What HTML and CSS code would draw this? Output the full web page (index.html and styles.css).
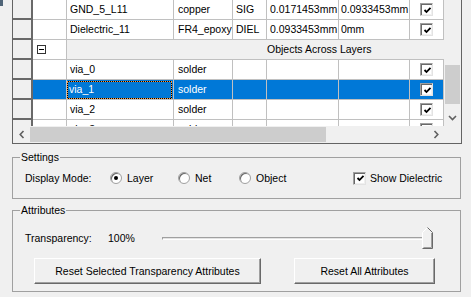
FILE: index.html
```html
<!DOCTYPE html>
<html>
<head>
<meta charset="utf-8">
<link rel="stylesheet" href="styles.css">
</head>
<body>
<div class="corner-mark"></div>
<div class="grid">
  <div class="grid-main">
    <div class="rows">
      <div class="row">
        <div class="c hdr"></div><div class="c c2"></div><div class="c name">GND_5_L11</div><div class="c mat">copper</div><div class="c typ">SIG</div><div class="c th">0.0171453mm</div><div class="c th2">0.0933453mm</div><div class="c chk"><span class="cb"><svg width="9" height="9" viewBox="0 0 9 9"><path d="M1.5 4 L3.5 6 L7.5 1.8" fill="none" stroke="#000" stroke-width="1.8"/></svg></span></div>
      </div>
      <div class="row">
        <div class="c hdr"></div><div class="c c2"></div><div class="c name">Dielectric_11</div><div class="c mat">FR4_epoxy</div><div class="c typ">DIEL</div><div class="c th">0.0933453mm</div><div class="c th2">0mm</div><div class="c chk"><span class="cb"><svg width="9" height="9" viewBox="0 0 9 9"><path d="M1.5 4 L3.5 6 L7.5 1.8" fill="none" stroke="#000" stroke-width="1.8"/></svg></span></div>
      </div>
      <div class="row group">
        <div class="c hdr"></div><div class="c c2"><span class="minus"></span></div><div class="c span">Objects Across Layers</div>
      </div>
      <div class="row">
        <div class="c hdr"></div><div class="c c2"></div><div class="c name">via_0</div><div class="c mat">solder</div><div class="c typ"></div><div class="c th"></div><div class="c th2"></div><div class="c chk"><span class="cb"><svg width="9" height="9" viewBox="0 0 9 9"><path d="M1.5 4 L3.5 6 L7.5 1.8" fill="none" stroke="#000" stroke-width="1.8"/></svg></span></div>
      </div>
      <div class="row sel">
        <div class="c hdr"></div><div class="c c2"></div><div class="c name"><span class="focus">via_1</span></div><div class="c mat">solder</div><div class="c typ"></div><div class="c th"></div><div class="c th2"></div><div class="c chk"><span class="cb"><svg width="9" height="9" viewBox="0 0 9 9"><path d="M1.5 4 L3.5 6 L7.5 1.8" fill="none" stroke="#000" stroke-width="1.8"/></svg></span></div>
      </div>
      <div class="row">
        <div class="c hdr"></div><div class="c c2"></div><div class="c name">via_2</div><div class="c mat">solder</div><div class="c typ"></div><div class="c th"></div><div class="c th2"></div><div class="c chk"><span class="cb"><svg width="9" height="9" viewBox="0 0 9 9"><path d="M1.5 4 L3.5 6 L7.5 1.8" fill="none" stroke="#000" stroke-width="1.8"/></svg></span></div>
      </div>
      <div class="row">
        <div class="c hdr"></div><div class="c c2"></div><div class="c name">via_3</div><div class="c mat">solder</div><div class="c typ"></div><div class="c th"></div><div class="c th2"></div><div class="c chk"><span class="cb"><svg width="9" height="9" viewBox="0 0 9 9"><path d="M1.5 4 L3.5 6 L7.5 1.8" fill="none" stroke="#000" stroke-width="1.8"/></svg></span></div>
      </div>
    </div>
    <div class="vscroll">
      <div class="vtrack"><div class="vthumb"></div></div>
      <div class="arrow"><svg width="9" height="6" viewBox="0 0 9 6"><path d="M1 1 L4.5 4.5 L8 1" fill="none" stroke="#606060" stroke-width="1.6"/></svg></div>
    </div>
  </div>
  <div class="hbar">
    <div class="hscroll">
      <div class="arrow"><svg width="6" height="9" viewBox="0 0 6 9"><path d="M4.5 1 L1.2 4.5 L4.5 8" fill="none" stroke="#606060" stroke-width="1.6"/></svg></div>
      <div class="htrack"><div class="hthumb"></div></div>
      <div class="arrow"><svg width="6" height="9" viewBox="0 0 6 9"><path d="M1.5 1 L4.8 4.5 L1.5 8" fill="none" stroke="#606060" stroke-width="1.6"/></svg></div>
    </div>
    <div class="corner"></div>
  </div>
</div>

<fieldset class="box settings">
  <legend>Settings</legend>
  <div class="settings-row">
    <span class="lbl">Display Mode:</span>
    <label class="radio r1"><span class="dot on"></span>Layer</label>
    <label class="radio r2"><span class="dot"></span>Net</label>
    <label class="radio r3"><span class="dot"></span>Object</label>
    <label class="check"><span class="cb"><svg width="9" height="9" viewBox="0 0 9 9"><path d="M1.5 4 L3.5 6 L7.5 1.8" fill="none" stroke="#000" stroke-width="1.8"/></svg></span>Show Dielectric</label>
  </div>
</fieldset>

<fieldset class="box attrs">
  <legend>Attributes</legend>
  <div class="trans-row">
    <span class="tlbl">Transparency:</span>
    <span class="pct">100%</span>
    <div class="slider">
      <div class="track"></div>
      <svg class="thumb" width="11" height="22" viewBox="0 0 11 22"><path d="M0.5 21.5 L0.5 5.5 L5.5 0.5 L10.5 5.5 L10.5 21.5 Z" fill="#f0f0f0" stroke="none"/><path d="M0.5 21 L0.5 5.5 L5.5 0.5" fill="none" stroke="#ffffff"/><path d="M5.5 0.5 L10.5 5.5 L10.5 21.5 L0.5 21.5" fill="none" stroke="#696969"/><path d="M1.5 20.5 L9.5 20.5 L9.5 6" fill="none" stroke="#a0a0a0"/></svg>
    </div>
  </div>
  <div class="btn-row">
    <button class="btn b1">Reset Selected Transparency Attributes</button>
    <button class="btn b2">Reset All Attributes</button>
  </div>
</fieldset>
</body>
</html>
```
FILE: styles.css
```css
* { box-sizing: border-box; }
html, body { margin: 0; padding: 0; }
body {
  position: relative;
  width: 471px;
  height: 297px;
  overflow: hidden;
  background: #f0f0f0;
  font-family: "Liberation Sans", Arial, sans-serif;
  font-size: 10.5px;
  color: #000;
}
.corner-mark {
  position: absolute; left: 0; top: 0;
  width: 3px; height: 6px;
  background: #4f6477;
}

.grid {
  margin: -1px 0 0 12px;
  width: 450px;
  border: 1px solid #646464;
  background: #f0f0f0;
}
.grid-main { display: flex; height: 126px; }
.rows { width: 431px; height: 126px; overflow: hidden; }
.row { display: flex; height: 20px; }
.c {
  height: 20px;
  border-right: 1px solid #c0c0c0;
  border-bottom: 1px solid #c0c0c0;
  background: #fff;
  white-space: nowrap;
  overflow: hidden;
  line-height: 19px;
  padding-left: 3px;
}
.hdr { width: 20px; background: #f0f0f0; border-right: 2px solid #696969; border-bottom: 2px solid #696969; }
.c2 { width: 34px; }
.name { width: 107px; }
.mat { width: 59px; padding-left: 4px; }
.typ { width: 34px; }
.th { width: 72px; }
.th2 { width: 71px; padding-left: 2px; }
.chk { width: 34px; padding-left: 10px; display: flex; align-items: center; }
.span { width: 377px; background: #f0f0f0; border-right: none; padding-left: 200px; }
.group .c2 { display: flex; align-items: center; padding-left: 4px; }
.minus {
  width: 9px; height: 9px;
  border: 1px solid #333;
  background: #fff;
  position: relative;
  margin-top: -1px;
}
.minus::after {
  content: ""; position: absolute; left: 1px; top: 3px; width: 5px; height: 1px; background: #000;
}
.sel .c:not(.hdr) { background: #0078d7; color: #fff; }
.sel .name { padding: 1px 1px 1px 0; }
.focus {
  display: block;
  height: 18px;
  line-height: 16px;
  padding-left: 2px;
  position: relative;
  outline: 1px solid #000;
  outline-offset: -1px;
}
.focus::after {
  content: ""; position: absolute; inset: 0;
  border: 1px dotted #ff9a3c;
}

.cb {
  display: inline-flex;
  align-items: center;
  justify-content: center;
  width: 13px; height: 13px;
  background: #fff;
  border: 1px solid;
  border-color: #a0a0a0 #e3e3e3 #e3e3e3 #a0a0a0;
  box-shadow: inset 1px 1px 0 #696969, inset -1px -1px 0 #f0f0f0;
}
.cb svg { margin-left: 1px; margin-top: 1px; }

.vscroll { width: 17px; height: 126px; display: flex; flex-direction: column; background: #f0f0f0; }
.vtrack { flex: 1; padding: 65px 0 0 1px; }
.vthumb { width: 15px; height: 39px; background: #cdcdcd; }
.arrow { width: 17px; height: 17px; display: flex; align-items: center; justify-content: center; }

.hbar { display: flex; height: 17px; }
.hscroll { width: 431px; display: flex; background: #f0f0f0; }
.htrack { flex: 1; padding: 1px 0 0 0; }
.hthumb { width: 296px; height: 15px; background: #cdcdcd; }
.corner { width: 17px; background: #f0f0f0; }

.box {
  margin: 0 0 0 12px;
  width: 449px;
  padding: 0;
  border: 1px solid #a0a0a0;
  min-inline-size: 0;
}
.box legend {
  margin-left: 7px;
  padding: 0 1px;
  line-height: 12px;
  font-size: 10.5px;
}
.settings { margin-top: 7px; }
.settings-row {
  display: flex;
  align-items: center;
  height: 14px;
  margin: 8px 0 13px 12px;
}
.lbl { width: 85px; }
.radio { display: flex; align-items: center; gap: 5px; }
.r1 { width: 68px; }
.r2 { width: 61px; }
.r3 { width: 114px; }
.dot {
  width: 12px; height: 12px; border-radius: 50%;
  background: #fff;
  border: 1px solid #a0a0a0;
  box-shadow: inset 1px 1px 0 #696969;
  position: relative;
}
.dot.on::after {
  content: ""; position: absolute; left: 3px; top: 3px; width: 4px; height: 4px; border-radius: 50%; background: #000;
}
.check { display: flex; align-items: center; gap: 4px; }

.attrs { margin-top: 5px; }
.trans-row {
  display: flex;
  align-items: center;
  height: 22px;
  margin: 11px 0 0 12px;
}
.tlbl { width: 83px; }
.pct { width: 54px; }
.slider { position: relative; width: 272px; height: 22px; }
.track {
  position: absolute; left: 0; top: 10px;
  width: 262px; height: 3px;
  border-top: 1px solid #a0a0a0;
  border-left: 1px solid #a0a0a0;
  border-bottom: 1px solid #fff;
  background: #e3e3e3;
}
.thumb { position: absolute; left: 260px; top: 0; }

.btn-row { display: flex; gap: 33px; margin: 9px 0 7px 21px; }
.btn {
  height: 26px;
  font: inherit;
  color: #000;
  background: #f0f0f0;
  border: 1px solid;
  border-color: #fff #696969 #696969 #fff;
  box-shadow: inset -1px -1px 0 #a0a0a0;
  padding: 0;
}
.b1 { width: 227px; }
.b2 { width: 141px; }
```
